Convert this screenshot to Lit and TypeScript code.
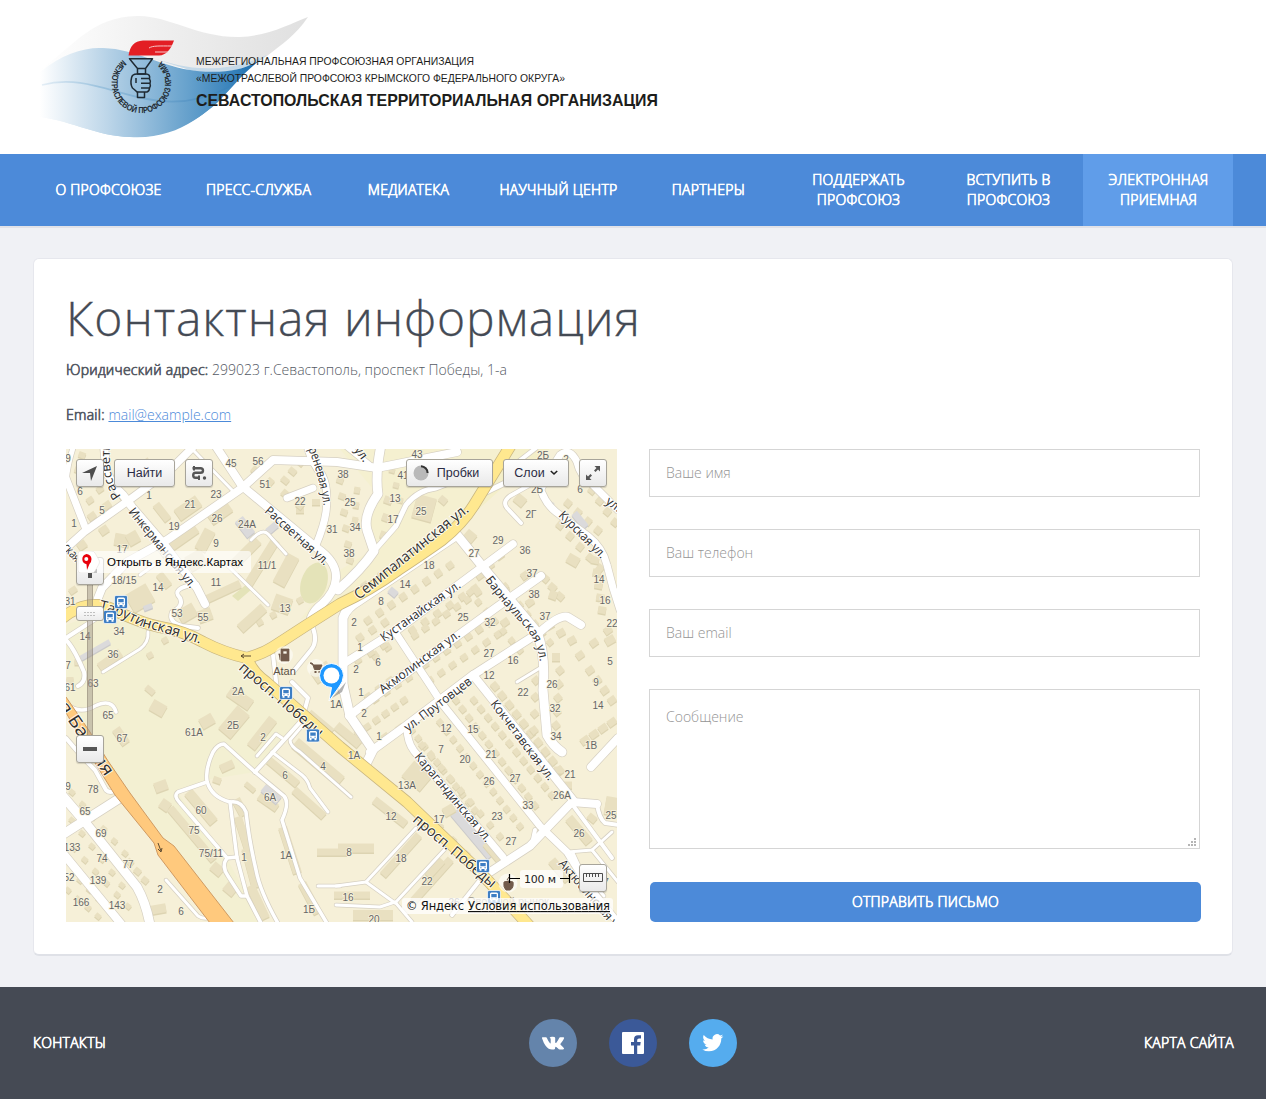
import { LitElement, html, svg, css } from "lit";
import { customElement } from "lit/decorators.js";
import { classMap } from "lit/directives/class-map.js";

/* ---------- Map data: [width, path] ---------- */
const ROADS: [number, string][] = [
  [8, "M104 445L106 468Q109 482 123 495L132 507L163 543L197 588L205 604"],
  [7.5, "M62 552L84 532L132 498L170 470L193 447"],
  [8, "M98 598L102 588L127 562L167 540L242 488L273 460L337 462L377 468L457 452"],
  [8, "M215 445L242 486L317 548Q337 562 336 578Q335 592 322 604Q314 610 311 618"],
  [7, "M307 445Q311 462 322 475Q329 488 326 512Q324 526 316 545"],
  [7, "M66 478L85 527"],
  [5, "M74 445Q68 462 66 482"],
  [3, "M193 450L232 490"],
  [7, "M287 498L313 488"],
  [3, "M251 540Q262 528 268 534L286 554"],
  [3, "M228 566L268 605"],
  [3, "M140 575L158 562"],
  [4, "M197 584Q170 588 180 598Q184 606 172 612Q168 622 182 626L198 628"],
  [3, "M148 632Q149 642 140 649L103 672"],
  [4, "M66 640Q74 648 84 672Q86 682 78 686"],
  [4, "M66 638L100 616"],
  [4, "M313 628Q318 642 311 650L293 672"],
  [4, "M273 655L277 690"],
  [9, "M381 445Q375 475 378 494Q363 515 367 530L374 551Q362 569 338 590"],
  [5, "M374 551L396 526L406 505Q418 490 436 488L462 478"],
  [6, "M345 445L372 467"],
  [9, "M343 690V618Q346 608 360 600L457 535L487 572L537 632Q546 655 543 690L547 735Q553 746 562 752"],
  [7.5, "M343 664L400 628L513 544"],
  [8, "M349 716L390 685L497 607L541 576"],
  [8, "M370 752L407 725L473 675L540 632Q560 614 568 617L581 625"],
  [9, "M343 685L350 716L373 750L366 764"],
  [7, "M397 635L430 685L443 705L540 826L567 852L588 886L620 925"],
  [7, "M407 727Q407 742 414 751L503 857"],
  [8, "M473 675L573 800"],
  [8, "M490 872L530 846L547 828L572 802L597 804"],
  [4, "M597 804Q599 818 605 823L618 825"],
  [4, "M572 804L612 858"],
  [4, "M532 844L535 830"],
  [7, "M538 482Q544 503 556 512L588 536Q603 548 607 565L613 588L620 610"],
  [7, "M541 489Q550 470 560 455Q570 447 577 462Q580 476 592 484L618 510"],
  [4, "M521 523L507 508Q502 502 510 496L535 482L548 462"],
  [5, "M478 496L505 483"],
  [4, "M510 468L536 448"],
  [8, "M618 738L591 767"],
  [9, "M62 835L120 798"],
  [9, "M62 795L85 822L137 887Q146 903 150 925"],
  [8, "M62 852L122 925"],
  [4, "M66 738Q80 755 95 770L106 790Q110 794 116 790"],
  [3.5, "M66 704Q80 715 95 706Q112 698 116 712"],
  [3.5, "M255 772L224 744Q218 744 213 752Q205 769 207 781Q211 797 230 802L237 858L247 896L262 925"],
  [3.5, "M207 782L178 792Q173 796 180 803L227 858L237 857"],
  [3.5, "M230 802Q241 800 246 812Q249 840 256 870Q260 892 279 925"],
  [3.5, "M227 858Q221 866 228 876L241 896L247 896"],
  [3.5, "M255 772L284 796Q290 803 282 820L300 878L328 925"],
  [4, "M255 772L302 720L308 698L292 682"],
  [3, "M257 756L276 734L282 738"],
  [3, "M272 752L302 775Q308 780 310 788L328 812"],
  [3, "M302 726L290 740Q290 746 300 752L351 797"],
  [3, "M166 880L198 916Q204 920 212 917"],
  [3, "M336 886L366 882L416 828"],
  [3, "M366 882L395 903L446 848"],
  [3, "M336 905L380 907L395 902L412 922"],
  [3, "M318 886H340"],
  [4, "M480 880L452 915"],
  [3, "M568 852L592 850L612 832"],
  [3, "M573 853L579 866L604 896"],
  [3, "M592 850L618 882"],
  [3, "M517 682L540 668"],
];

const YELLOW =
  "M60 620Q78 604 98 605Q108 606 122 614Q145 624 160 627Q184 631 203 642Q224 653 247 658Q262 654 273 647Q305 626 340 604Q370 590 398 570Q425 552 442 540Q462 524 474 505L514 440";
const POBEDY = "M247 658Q252 672 266 682L340 747L407 802L480 872L533 930";

/* [x1, y1, x2, y2, count, w, h, angle] : evenly spaced houses */
const HOUSES: number[][] = [
  [73, 590, 96, 572, 2, 8, 6, -35], [92, 516, 122, 494, 3, 8, 7, -35], [90, 500, 110, 478, 3, 7, 6, -35],
  [126, 478, 146, 462, 3, 8, 6, -35], [78, 470, 82, 455, 2, 7, 6, 20], [82, 545, 104, 530, 2, 9, 8, -35],
  [285, 480, 300, 462, 3, 8, 6, 40], [300, 510, 316, 502, 2, 8, 6, 0], [255, 470, 300, 505, 4, 7, 7, 40],
  [340, 480, 350, 560, 6, 7, 6, 20], [357, 490, 355, 520, 3, 6, 6, 10], [388, 500, 384, 535, 3, 8, 7, 20],
  [392, 470, 400, 500, 3, 6, 5, 15], [365, 585, 448, 530, 6, 7, 7, -35], [368, 620, 450, 565, 8, 7, 7, -35],
  [360, 637, 385, 622, 3, 7, 7, -35], [375, 655, 475, 588, 9, 7, 7, -35], [415, 635, 478, 592, 7, 7, 6, -35],
  [358, 660, 384, 645, 3, 7, 6, -35], [425, 664, 490, 622, 7, 7, 7, -35], [368, 696, 390, 680, 3, 7, 6, -35],
  [505, 588, 525, 575, 2, 8, 7, -35], [430, 680, 498, 634, 7, 7, 6, -35], [505, 622, 530, 602, 3, 8, 7, -35],
  [470, 592, 520, 650, 7, 6, 6, 50], [505, 586, 550, 642, 7, 6, 6, 50], [480, 575, 500, 555, 3, 8, 7, -35],
  [358, 733, 404, 700, 6, 7, 6, -35], [364, 706, 420, 670, 6, 7, 6, -35], [385, 737, 400, 728, 2, 8, 7, -35],
  [412, 730, 475, 810, 11, 6, 6, 50], [440, 722, 520, 826, 13, 6, 6, 50], [422, 745, 500, 836, 9, 6, 6, 50],
  [456, 700, 535, 805, 13, 7, 6, 50], [474, 700, 552, 795, 12, 7, 6, 50], [495, 686, 560, 770, 10, 8, 7, 50],
  [560, 670, 556, 725, 5, 7, 7, 50], [536, 680, 534, 730, 4, 7, 7, 50], [558, 770, 568, 785, 2, 8, 7, 0],
  [585, 740, 612, 722, 4, 9, 7, -35], [560, 525, 600, 568, 5, 7, 7, 40], [568, 503, 598, 530, 4, 7, 7, 40],
  [592, 490, 615, 522, 4, 7, 7, 40], [545, 462, 555, 478, 2, 7, 6, 30], [595, 560, 602, 610, 5, 8, 7, 10],
  [550, 625, 572, 640, 3, 8, 7, -30], [580, 655, 608, 630, 3, 8, 7, -35], [560, 596, 545, 578, 3, 8, 7, 40],
  [590, 670, 612, 700, 4, 8, 7, -35], [72, 792, 125, 853, 6, 6, 5, 40], [72, 820, 122, 885, 6, 6, 5, 40],
  [74, 848, 128, 906, 6, 6, 5, 40], [130, 862, 145, 880, 3, 7, 6, 40], [68, 890, 98, 916, 4, 6, 5, 40],
  [80, 880, 118, 918, 5, 6, 5, 40], [580, 830, 592, 818, 2, 9, 7, 40], [440, 826, 480, 868, 4, 6, 6, 40],
  [260, 622, 300, 600, 4, 6, 6, -30], [70, 680, 78, 662, 2, 7, 6, 0], [150, 655, 165, 640, 2, 6, 6, -30],
];

/* [cx, cy, w, h, angle, grey?] : individual blocks */
const BLOCKS: number[][] = [
  [188, 508, 26, 13, -35], [220, 513, 24, 12, -35], [178, 540, 44, 12, -35], [205, 540, 22, 12, 118],
  [162, 512, 20, 8, 52], [196, 560, 18, 16, -30], [246, 552, 34, 10, -45], [262, 562, 52, 9, -58],
  [286, 570, 32, 13, -62], [252, 618, 32, 10, -42], [282, 604, 18, 16, 20], [222, 592, 40, 8, -25],
  [140, 598, 24, 20, -30], [164, 580, 16, 8, 52], [187, 613, 18, 14, -30], [205, 615, 14, 12, -20],
  [122, 540, 15, 12, 10], [133, 538, 12, 12, -30], [110, 660, 26, 9, -35], [424, 508, 20, 24, 15],
  [245, 527, 20, 10, 52, 1], [272, 528, 12, 7, -40, 1], [95, 650, 34, 5, -30, 1], [148, 607, 9, 5, -20, 1],
  [393, 592, 9, 7, 40, 1], [580, 520, 18, 7, 50, 1], [550, 504, 7, 6, 30, 1], [520, 500, 11, 10, 40],
  [234, 722, 30, 16, -50], [240, 698, 26, 12, 35], [262, 733, 36, 10, -52], [158, 708, 15, 12, 30],
  [207, 721, 14, 11, -30], [121, 736, 18, 9, 55], [161, 786, 13, 10, -20], [165, 805, 10, 10, 35],
  [201, 807, 40, 10, 50], [192, 834, 68, 8, 50], [217, 869, 12, 10, 40], [230, 889, 12, 10, 40],
  [240, 807, 18, 9, 62], [243, 833, 34, 8, 72], [251, 868, 40, 9, 75], [258, 902, 36, 9, 65],
  [268, 802, 22, 8, 35], [271, 794, 20, 9, 40, 1], [283, 772, 38, 8, 40], [309, 803, 40, 8, 42],
  [318, 762, 60, 12, 40], [290, 850, 48, 9, 72], [310, 898, 34, 9, 62], [227, 766, 14, 8, -25],
  [217, 780, 8, 6, 20], [250, 787, 12, 5, 40], [158, 909, 16, 9, -10], [417, 776, 24, 20, 40],
  [390, 812, 40, 8, 38], [356, 848, 36, 9, 0], [352, 895, 36, 7, 0], [373, 915, 40, 10, 0],
  [401, 855, 54, 8, -48], [432, 880, 56, 8, -48], [435, 868, 22, 8, -48], [475, 832, 58, 16, 50, 1],
  [494, 853, 26, 8, 50], [449, 810, 12, 9, -30], [579, 830, 32, 9, 50], [560, 870, 26, 9, 50],
  [319, 724, 30, 12, 40], [348, 735, 30, 9, 40], [332, 852, 30, 7, 0], [322, 672, 20, 14, -35],
  [612, 806, 14, 18, 10], [470, 536, 11, 10, 40], [573, 560, 12, 10, 30], [443, 500, 8, 7, 40],
  [610, 640, 10, 8, -30], [553, 595, 8, 8, 20], [556, 657, 8, 8, 0], [150, 690, 10, 6, 40],
];

const NUMBERS: [number, number, string][] = [
  [68, 462, "9"], [80, 495, "6"], [102, 514, "5"], [74, 527, "1"], [149, 499, "1"], [190, 508, "21"], [216, 498, "23"],
  [217, 522, "26"], [174, 530, "19"], [122, 553, "17"], [216, 547, "9"], [247, 528, "24А"], [231, 467, "45"], [258, 465, "56"],
  [265, 488, "51"], [300, 505, "22"], [332, 533, "31"], [267, 569, "11/1"], [216, 586, "11"], [158, 591, "14"],
  [124, 584, "18/15"], [70, 605, "31"], [177, 617, "53"], [203, 621, "55"], [285, 612, "13"], [85, 640, "14"],
  [119, 635, "34"], [113, 658, "36"], [68, 669, "7"], [93, 687, "63"], [70, 691, "61"], [417, 458, "43"], [343, 478, "38"],
  [403, 479, "41"], [350, 506, "25"], [395, 502, "13"], [421, 515, "25"], [393, 523, "17"], [355, 531, "34"], [349, 557, "38"],
  [498, 544, "29"], [525, 554, "36"], [474, 557, "27"], [429, 569, "18"], [405, 588, "14"], [381, 605, "8"], [354, 626, "2"],
  [532, 577, "37"], [534, 598, "38"], [599, 583, "14"], [605, 604, "16"], [612, 627, "22"], [463, 621, "25"], [490, 626, "32"],
  [545, 620, "37"], [360, 651, "1"], [378, 666, "6"], [489, 657, "27"], [513, 664, "16"], [356, 673, "2"], [489, 679, "12"],
  [610, 665, "5"], [596, 686, "9"], [552, 688, "26"], [543, 459, "2Б"], [537, 493, "2Б"], [531, 518, "2Г"], [580, 493, "6"],
  [566, 463, "2"], [108, 719, "65"], [122, 742, "67"], [194, 736, "61А"], [238, 695, "2А"], [233, 729, "2Б"], [263, 741, "2"],
  [323, 770, "4"], [285, 779, "6"], [270, 801, "6А"], [93, 793, "78"], [68, 790, "9"], [85, 815, "65"], [101, 837, "69"],
  [72, 851, "133"], [102, 862, "74"], [128, 868, "77"], [69, 881, "52"], [98, 884, "139"], [81, 906, "166"], [117, 909, "143"],
  [201, 814, "60"], [194, 834, "75"], [211, 857, "75/11"], [244, 861, "1"], [286, 859, "1А"], [160, 893, "2"], [181, 915, "6"],
  [309, 913, "1Б"], [361, 696, "1"], [364, 717, "2"], [379, 740, "1"], [446, 732, "12"], [473, 733, "15"], [441, 753, "7"],
  [465, 763, "20"], [491, 758, "21"], [523, 696, "22"], [555, 712, "32"], [598, 709, "14"], [556, 740, "34"], [591, 749, "1В"],
  [570, 778, "21"], [354, 759, "1А"], [336, 708, "1А"], [407, 789, "13А"], [489, 785, "26"], [515, 782, "27"], [562, 799, "26А"],
  [528, 809, "33"], [439, 823, "17"], [497, 820, "23"], [391, 820, "12"], [511, 845, "27"], [579, 837, "26"], [611, 819, "25"],
  [349, 856, "8"], [401, 862, "18"], [427, 885, "22"], [348, 901, "16"], [374, 923, "20"], [454, 906, "26"], [606, 886, "7"],
];

/* [path, text, length, size] */
const STREETS: [string, string, number, number?][] = [
  ["M121 496Q106 478 111 438", "Рассветн", 56],
  ["M128 512L193 592", "Инкерманская ул.", 99],
  ["M264 512L327 568", "Рассветная ул.", 81],
  ["M303 437Q318 468 324 508", "Сиреневая ул.", 72],
  ["M99 610Q118 614 140 626Q160 631 204 645", "Тарутинская ул.", 107, 14.5],
  ["M359 600L472 509", "Семипалатинская ул.", 142, 14.5],
  ["M384 642L463 586", "Кустанайская ул.", 95],
  ["M383 694L461 636", "Акмолинская ул.", 97],
  ["M408 732L473 683", "ул. Прутовцев", 81],
  ["M485 580Q505 607 523 625Q538 642 540 663", "Барнаульская ул.", 100],
  ["M558 516L604 562", "Курская ул.", 61],
  ["M605 503L620 514", "ул.", 16],
  ["M354 450L366 466", "ул.", 16],
  ["M490 704L549 782", "Кокчетавская ул.", 97],
  ["M414 757L487 844", "Карагандинская ул.", 112],
  ["M238 669L320 739", "просп. Победы", 106, 14.5],
  ["M412 821L492 889", "просп. Победы", 104, 14.5],
  ["M558 864L620 936", "Актюбинская ул.", 94],
  ["M62 548L76 563", "ская", 20],
  ["M52 697L106 778", "ая Балкия", 96, 17],
];

const STOPS = [[121, 602], [110, 617], [286, 693], [313, 735.5], [483, 866], [494, 897]];

@customElement("city-map")
class CityMap extends LitElement {
  static styles = css`
    :host { display: block; position: relative; width: 551px; height: 473px; overflow: hidden; }
    .ground { display: block; width: 551px; height: 473px; }
    .num { font: 10px "Liberation Sans", sans-serif; fill: #666; text-anchor: middle; stroke: #f8f3dd; stroke-width: 1.6px; paint-order: stroke; }
    .street { font-family: "Open Sans", "Noto Sans", sans-serif; font-weight: 400; fill: #2e2e2e; stroke: #fff; stroke-opacity: .75; stroke-width: 2px; paint-order: stroke; }
    .poi { font: 11px "Liberation Sans", sans-serif; fill: #5c5246; text-anchor: middle; }
    .market { fill: #9b9488; }
    .btn { position: absolute; box-sizing: border-box; height: 28px; min-width: 28px; border: 1px solid #a7a49a; border-radius: 3px;
      background: linear-gradient(#fff, #e9e9e9); display: flex; align-items: center; justify-content: center; gap: 6px; padding: 0;
      font: 12.5px "Liberation Sans", Arial, sans-serif; color: #2b2b44; box-shadow: 0 1px 1px rgba(0,0,0,.15); }
    .locate { left: 10px; top: 10px; }
    .find { left: 48px; top: 10px; width: 61px; }
    .route { left: 119px; top: 10px; }
    .jams { left: 340px; top: 10px; width: 87px; gap: 8px; padding-right: 7px; }
    .layers { left: 437px; top: 10px; width: 66px; gap: 5px; }
    .full { left: 513px; top: 10px; }
    .plus { left: 10px; top: 108px; }
    .minus { left: 10px; top: 286px; }
    .ruler { left: 513px; top: 415px; }
    .track { position: absolute; left: 21px; top: 136px; width: 6px; height: 152px; box-sizing: border-box; border: solid rgba(120,110,95,.35); border-width: 0 1px; background: rgba(160,150,135,.5); }
    .thumb { position: absolute; box-sizing: border-box; left: 10px; top: 157px; width: 28px; height: 15px; border: 1px solid #a7a49a; border-radius: 3px; background: linear-gradient(#fff, #ececec); display: flex; align-items: center; justify-content: center; }
    .open { position: absolute; left: 11px; top: 102px; width: 174px; height: 22px; box-sizing: border-box; padding-left: 30px; border-radius: 3px; background: rgba(255,255,255,.65);
      font: 11.5px/22px "Liberation Sans", sans-serif; color: #000; white-space: nowrap; }
    .open svg { position: absolute; left: 0; top: 0; }
    .scale { position: absolute; left: 442px; top: 421px; width: 64px; height: 18px; }
    .scale-text { font: 11px "DejaVu Sans", sans-serif; fill: #222; }
    .legal { position: absolute; left: 336px; top: 449px; width: 211px; height: 16px; box-sizing: border-box; padding-left: 4px; border-radius: 3px; background: rgba(255,255,255,.75); }
    .legal svg { display: block; }
    .legal-text { font: 11.5px "DejaVu Sans", sans-serif; fill: #111; }
    .legal-link { text-decoration: underline; }
  `;

  private house(cx: number, cy: number, w: number, h: number, a: number, grey = false) {
    const side = grey ? "#cbcaca" : "#ddd4b2";
    const top = grey ? "#dbdadb" : "#e9e0c1";
    return svg`<g transform=${`translate(${cx} ${cy})`}>
      <rect x=${-w / 2} y=${-h / 2} width=${w} height=${h} transform=${`translate(0 1.5) rotate(${a})`} fill=${side}></rect>
      <rect x=${-w / 2} y=${-h / 2} width=${w} height=${h} transform=${`rotate(${a})`} fill=${top}></rect></g>`;
  }

  render() {
    const rows = HOUSES.flatMap(([x1, y1, x2, y2, n, w, h, a]) =>
      Array.from({ length: n }, (_, i) => {
        const t = n > 1 ? i / (n - 1) : 0;
        return this.house(x1 + (x2 - x1) * t, y1 + (y2 - y1) * t, w, h, a);
      })
    );
    return html`
      <svg class="ground" viewBox="66 449 551 473">
        <rect x="66" y="449" width="551" height="473" fill="#f6f0d8"></rect>
        <path d="M66 625L100 612L240 662L300 720L255 772L205 780L178 793L225 855L262 922H225L160 840L66 700Z" fill="#f3f0d2"></path>
        <path d="M340 449H510L440 540L340 600L300 620L340 570L372 550L365 525L378 495Z" fill="#f5f0d0"></path>
        <path d="M512 449H550L500 490L450 535Z" fill="#f4efc9"></path>
        <ellipse cx="314" cy="583" rx="13" ry="21" fill="#e4e3b8" transform="rotate(18 314 583)"></ellipse>
        <path d="M232 596L247 584L252 589L238 601Z" fill="#e4e3b8"></path>
        ${rows}
        ${BLOCKS.map(([x, y, w, h, a, g]) => this.house(x, y, w, h, a, !!g))}
        <g fill="none" stroke-linecap="round" stroke-linejoin="round">
          ${ROADS.map(([w, d]) => svg`<path d=${d} stroke="#d6d0c2" stroke-width=${w + 1.4}></path>`)}
          ${ROADS.map(([w, d]) => svg`<path d=${d} stroke="#fff" stroke-width=${w}></path>`)}
          <path d=${YELLOW} stroke="#c9b680" stroke-width="12"></path>
          <path d=${POBEDY} stroke="#c9b680" stroke-width="12"></path>
          <path d=${YELLOW} stroke="#ffe88f" stroke-width="10.5"></path>
          <path d=${POBEDY} stroke="#ffe88f" stroke-width="10.5"></path>
        </g>
        <path d="M60 692L66 697L90 732L108 761L130 793L163 838L174 846L234 923H210L158 855L154 843L115 795L90 755L60 702Z" fill="#ffc97d" stroke="#cf9a62" stroke-width="1"></path>
        <path d="M158 843L161 851M158 849L161 852L162 848M251 656H241M244 654L241 656L244 658" fill="none" stroke="#5d4a30" stroke-width="1"></path>
        ${NUMBERS.map(([x, y, t]) => svg`<text class="num" x=${x} y=${y}>${t}</text>`)}
        ${STREETS.map(([d, t, len, size], i) => svg`<path id=${`s${i}`} d=${d} fill="none"></path>
          <text class="street" font-size=${size ?? 12.5}><textPath href=${`#s${i}`} textLength=${len} lengthAdjust="spacingAndGlyphs">${t}</textPath></text>`)}
        <circle cx="284" cy="655" r="9" fill="#fff" opacity=".5"></circle>
        <path d="M281 649H289V661H281ZM283 651V654H287V651ZM278.500 654H280V660" fill="#725b4b" fill-rule="evenodd" stroke="#725b4b" stroke-width=".7"></path>
        <text class="poi" x="284.500" y="675">Atan</text>
        <circle cx="316" cy="668" r="9" fill="#fff" opacity=".5"></circle>
        <path d="M310 663H312L313.500 665H322L320 669.500H314.500L313 665Z" stroke="#725b4b" stroke-width="1" fill="#725b4b"></path>
        <path d="M314.500 672H316.500M318.500 672H320.500" stroke="#725b4b" stroke-width="1.800"></path>
        <circle cx="508" cy="883" r="9.500" fill="#fff" opacity=".6"></circle>
        <path d="M504 882Q508 880 513 882Q514 888 510 890H506Q503 887 504 882ZM507 880L509 877" fill="#725b4b" stroke="#725b4b"></path>
        <text class="poi market" x="508" y="905">Овощной рынок</text>
        ${STOPS.map(([x, y]) => svg`<g transform=${`translate(${x} ${y})`}>
          <rect x="-6.500" y="-6.500" width="13" height="13" rx="1.500" fill="#3d7ec4" stroke="#fff" stroke-width=".7"></rect>
          <path d="M-2.500 -4.500H2.500Q4 -4.500 4 -3V3H-4V-3Q-4 -4.500 -2.500 -4.500ZM-2.700 -3V.200H2.700V-3ZM-2.700 1.200V2.200H-1.500V1.200ZM1.500 1.200V2.200H2.700V1.200ZM-3.500 3H-1.500V4.700H-3.500ZM1.500 3H3.500V4.700H1.500Z" fill="#fff" fill-rule="evenodd"></path></g>`)}
        <path d="M332 698L346 682L342 692Z" fill="#666" opacity=".5"></path>
        <path d="M331.500 663.500A12 12 0 0 1 343.500 675.500Q343 682 339 687L329 701L331.500 687.500A12 12 0 0 1 331.500 663.500Z" fill="#1e98ff" stroke="#fff" stroke-width="1"></path>
        <circle cx="331.500" cy="675.500" r="8" fill="#fff"></circle>
      </svg>

      <div class="track"></div>
      <button class="btn locate"><svg width="18" height="18"><path d="M1 9L16 2L10 17L9 9Z" fill="#4d4d4d"></path></svg></button>
      <button class="btn find">Найти</button>
      <button class="btn route"><svg width="16" height="16" fill="none" stroke="#555" stroke-width="2.400"><path d="M1.500 3.200H9.500Q12 3.200 12 5.500T9.500 7.800H4.500Q2.200 7.800 2.200 10.300T4.500 12.800H9"></path><path d="M3 1V5.400M8 10.600V15" stroke-width="2"></path><circle cx="13.500" cy="13" r="1.700" fill="#555" stroke="none"></circle></svg></button>
      <button class="btn jams"><svg width="16" height="16"><circle cx="8" cy="8" r="7.500" fill="#b9b9b9"></circle><path d="M8 1.200A6.800 6.800 0 0 1 14.600 8" fill="none" stroke="#333" stroke-width="2"></path></svg>Пробки</button>
      <button class="btn layers">Слои<svg width="8" height="6"><path d="M.800 1L4 4L7.200 1" fill="none" stroke="#222" stroke-width="1.600"></path></svg></button>
      <button class="btn full"><svg width="16" height="16"><path d="M9.500 1H15V6.500L13 4.500L10.500 7L9 5.500L11.500 3ZM1 9.500V15H6.500L4.500 13L7 10.500L5.500 9L3 11.500Z" fill="#555"></path></svg></button>
      <button class="btn plus"><svg width="14" height="14"><path d="M5 0H9V5H14V9H9V14H5V9H0V5H5Z" fill="#555"></path></svg></button>
      <button class="btn minus"><svg width="14" height="4"><rect width="14" height="4" fill="#555"></rect></svg></button>
      <div class="thumb"><svg width="12" height="6"><path d="M.500 1.500H12M.500 4.500H12" stroke="#888" stroke-dasharray="1 2"></path></svg></div>
      <button class="btn ruler"><svg width="22" height="12" fill="none" stroke="#4d4d4d"><path d="M1.500 1.500H20.500V9.500H1.500ZM4.500 2V5M7.500 2V5M10.500 2V5M13.500 2V5M16.500 2V5"></path></svg></button>
      <div class="open"><svg width="24" height="22"><path d="M1 3Q1 0 4 0H14Q17 0 18 2L22 9Q23 11 22 13L18 20Q17 22 14 22H4Q1 22 1 19Z" fill="#fff" stroke="#dedbd5" stroke-width=".500"></path><path d="M9.500 3A5.200 5.200 0 0 1 14.500 8Q14.500 11 12.500 13L10 19L9.500 13.200A5.200 5.200 0 0 1 9.500 3Z" fill="#e8000b"></path><circle cx="9.300" cy="8" r="2" fill="#fff"></circle></svg><span>Открыть в Яндекс.Картах</span></div>
      <svg class="scale"><rect x="12" width="43" height="18" rx="3" fill="#fff" opacity=".75"></rect><path d="M1.500 4V13M1.500 8.500H12M61.500 4V13M52 8.500H61" stroke="#000" stroke-width="1.200" fill="none"></path><text class="scale-text" x="16" y="13" textLength="32">100 м</text></svg>
      <div class="legal"><svg width="207" height="16"><text class="legal-text" x="0" y="12" textLength="58">© Яндекс</text><text class="legal-text legal-link" x="62" y="12" textLength="142">Условия использования</text></svg></div>
    `;
  }
}

@customElement("union-logo")
class UnionLogo extends LitElement {
  static styles = css`
    :host { display: block; }
    svg { display: block; }
    .small { font: 11px "Liberation Sans", Arial, sans-serif; fill: #1d1d1b; }
    .large { font: bold 17px "Liberation Sans", Arial, sans-serif; fill: #1d1d1b; }
    .ring { font: bold 8.8px "Liberation Sans Narrow", "Liberation Sans", sans-serif; fill: #222b33; }
  `;
  render() {
    return html`<svg width="640" height="154" viewBox="33 0 640 154">
      <defs>
        <linearGradient id="grey"><stop offset="0" stop-color="#fff"></stop><stop offset=".45" stop-color="#efefef"></stop><stop offset="1" stop-color="#e0e0e0"></stop></linearGradient>
        <linearGradient id="blue"><stop offset="0" stop-color="#fff"></stop><stop offset=".3" stop-color="#b5d1e6"></stop><stop offset=".65" stop-color="#67a2cd"></stop><stop offset="1" stop-color="#1269ad"></stop></linearGradient>
        <linearGradient id="low"><stop offset="0" stop-color="#fff"></stop><stop offset=".35" stop-color="#bdd6e9"></stop><stop offset=".75" stop-color="#6aa3cd"></stop><stop offset="1" stop-color="#3a86be"></stop></linearGradient>
        <linearGradient id="line"><stop offset="0" stop-color="#e4eef6"></stop><stop offset=".3" stop-color="#9dc3de"></stop><stop offset="1" stop-color="#3b83bb"></stop></linearGradient>
      </defs>
      <path d="M40 70C76 44 92 17 137 16C168 15 198 38 240 37C268 36 290 24 308 17C295 36 282 44 267 56C250 68 225 76 190 70L100 48Z" fill="url(#grey)"></path>
      <path d="M152 58C180 66 215 78 267 55C248 70 220 76 190 70Z" fill="#c5d9e8"></path>
      <path d="M40 72C62 54 84 47 103 48C137 49 160 67 197 71C228 74 249 69 267 55C245 70 235 85 217 103C190 127 160 138 130 137C97 136 75 122 40 117Z" fill="url(#blue)"></path>
      <path d="M40 85C80 76 110 92 147 100C180 106 210 98 232 86C210 111 180 140 130 137C97 136 75 122 40 117Z" fill="url(#low)"></path>
      <path d="M42 85C80 75 110 92 147 99C180 106 208 98 229 87" fill="none" stroke="url(#line)" stroke-width="1.800"></path>
      <path d="M128.500 55.500C130 46 134 41 143 40.500H174C171 49 166 55.500 159 55.500Z" fill="#e31e24"></path>
      <path d="M149 48C153 45.500 159 46 172 46M155 52H168" fill="none" stroke="#f7c9ca" stroke-width="1"></path>
      <g fill="none" stroke="#1f2a33" stroke-width="1.500" stroke-linejoin="round">
        <path d="M129.500 58.700H152.500L145.500 68.500H137.500ZM137.500 68.500H145.500V74H137.500ZM137.500 91.500V97.500H144.500V92"></path>
        <path d="M137 74Q132 74 131.500 78Q130 84 132.500 88Q135 90 137 92H147Q149.500 91 149.500 88Q151 86 150 83.500Q151 81 149.500 79Q150.500 74 146 74Z"></path>
        <path d="M141 78.500H149M141 83.200H150M141 88H149M136 78V83"></path>
      </g>
      <path id="arc" d="M122.800 60A29.800 29.800 0 1 0 160.500 60.500" fill="none"></path>
      <text class="ring"><textPath href="#arc" textLength="145" lengthAdjust="spacingAndGlyphs">МЕЖОТРАСЛЕВОЙ ПРОФСОЮЗ КРЫМА</textPath></text>
      <text class="small" x="196" y="65" textLength="278" lengthAdjust="spacingAndGlyphs">МЕЖРЕГИОНАЛЬНАЯ ПРОФСОЮЗНАЯ ОРГАНИЗАЦИЯ</text>
      <text class="small" x="196" y="82" textLength="369" lengthAdjust="spacingAndGlyphs">«МЕЖОТРАСЛЕВОЙ ПРОФСОЮЗ КРЫМСКОГО ФЕДЕРАЛЬНОГО ОКРУГА»</text>
      <text class="large" x="196" y="106" textLength="462" lengthAdjust="spacingAndGlyphs">СЕВАСТОПОЛЬСКАЯ ТЕРРИТОРИАЛЬНАЯ ОРГАНИЗАЦИЯ</text>
    </svg>`;
  }
}

@customElement("app-root")
class AppRoot extends LitElement {
  static styles = css`
    :host { display: block; min-height: 1099px; background: #f0f1f5; font: 300 14px/20px "Open Sans", "Noto Sans", sans-serif; color: #555a64; }
    .header { height: 154px; background: #fff; padding-left: 33px; overflow: hidden; }
    .nav { height: 72px; background: #4c8ad9; display: flex; padding: 0 33px; border-bottom: 2px solid #e1e2e8; }
    .item { width: 150px; display: flex; align-items: center; justify-content: center; text-align: center; padding: 0 15px 0 16px; box-sizing: border-box; color: #fff; text-decoration: none; text-transform: uppercase; }
    .heavy { -webkit-text-stroke: .7px currentColor; letter-spacing: .27px; }
    .item.active { background: #609de9; }
    .card { margin: 30px 33px 0; box-sizing: border-box; height: 698px; padding: 30px 32px 0; background: #fff; border: 1px solid #e6e7ed; border-bottom: 2px solid #dfe1e7; border-radius: 6px; }
    h1 { margin: 0; font-weight: 300; font-size: 48px; line-height: 57px; letter-spacing: .92px; color: #444a54; -webkit-text-stroke: .3px currentColor; }
    p { margin: 14px 0 0; }
    p + p { margin-top: 25px; }
    b { font-weight: 300; }
    .mail { color: #4c8ad9; }
    .split { display: flex; gap: 32px; margin-top: 24px; }
    .form { width: 551px; display: flex; flex-direction: column; gap: 32px; }
    .field { display: block; box-sizing: border-box; width: 551px; height: 48px; margin: 0; padding: 0 16px 2px; border: 1px solid #d5d5d5; border-radius: 0; background: #fff; font: inherit; outline: none; }
    .field::placeholder { color: #949494; opacity: 1; }
    .area { position: relative; height: 160px; }
    .message { height: 160px; padding-top: 17px; resize: none; }
    .grip { position: absolute; right: 4px; bottom: 3px; }
    .send { height: 40px; width: 551px; margin: 1px 0 0 1px; padding: 0; border: 0; border-radius: 5px; background: #4c8ad9; color: #fff; font: inherit; text-transform: uppercase; }
    .footer { margin-top: 31px; height: 112px; box-sizing: border-box; padding: 0 32px 0 33px; background: #454a54; display: grid; grid-template-columns: 1fr auto 1fr; align-items: center; text-transform: uppercase; }
    .footer a { color: #fff; text-decoration: none; }
    .right { text-align: right; }
    .social { display: flex; gap: 32px; margin-right: 1px; }
    .social svg { display: block; }
  `;

  private nav = ["О профсоюзе", "Пресс-служба", "Медиатека", "Научный центр", "Партнеры", "Поддержать профсоюз", "Вступить в профсоюз", "Электронная приемная"];

  render() {
    return html`
      <header class="header"><union-logo></union-logo></header>
      <nav class="nav">
        ${this.nav.map((t, i) => html`<a class=${classMap({ item: true, heavy: true, active: i === 7 })}>${t}</a>`)}
      </nav>
      <main class="card">
        <h1>Контактная информация</h1>
        <p><b class="heavy">Юридический адрес:</b> 299023 г.Севастополь, проспект Победы, 1-а</p>
        <p><b class="heavy">Email:</b> <a class="mail" href="mailto:mail@example.com">mail@example.com</a></p>
        <div class="split">
          <city-map></city-map>
          <form class="form">
            <input class="field" placeholder="Ваше имя">
            <input class="field" placeholder="Ваш телефон">
            <input class="field" placeholder="Ваш email">
            <div class="area">
              <textarea class="field message" placeholder="Сообщение"></textarea>
              <svg class="grip" width="8" height="8" fill="#b5b5b5"><path d="M6 0H8V2H6ZM3 3H5V5H3ZM6 3H8V5H6ZM0 6H2V8H0ZM3 6H5V8H3ZM6 6H8V8H6Z"></path></svg>
            </div>
            <button class="send heavy" type="button">Отправить письмо</button>
          </form>
        </div>
      </main>
      <footer class="footer">
        <a class="heavy">Контакты</a>
        <div class="social">
          <svg width="48" height="48"><circle cx="24" cy="24" r="24" fill="#6484ab"></circle><path d="M13.500 18.300H17Q17.600 18.300 18 19.200Q19.500 22.800 21 24.300Q21.700 24.800 21.700 23.500V20.300Q21.700 19 20.600 18.700Q21.300 17.800 23 17.800Q26.200 17.600 26.200 19V23Q26.300 24.700 27.500 23.400Q29 21.500 30.200 18.900Q30.500 18.300 31.200 18.300H34.500Q35.600 18.300 34.900 19.800Q34 21.800 31.500 24.700Q31.200 25.300 31.600 25.700Q34 27.700 35 29.300Q35.400 30.300 34 30.500H30.800Q29.800 30.500 28.800 29.300Q26.400 26.700 26.200 28.600Q26.200 30.500 25 30.500H23Q19.500 30.500 16.800 27Q14.500 24 13 19.300Q12.800 18.400 13.500 18.300Z" fill="#fff"></path></svg>
          <svg width="48" height="48"><circle cx="24" cy="24" r="24" fill="#3b5998"></circle><path d="M14 13H34Q35 13 35 14V34Q35 35 34 35H28.200V26.500H31.200L31.700 23H28.200V21Q28.200 19.400 30 19.400H32V16.200H29Q25 16.200 25 20.400V23H22V26.500H25V35H14Q13 35 13 34V14Q13 13 14 13Z" fill="#fff"></path></svg>
          <svg width="48" height="48"><circle cx="24" cy="24" r="24" fill="#55acee"></circle><g transform="translate(13.300 13.200) scale(.88)"><path d="M23.950 4.570a10 10 0 0 1-2.820.770 4.960 4.960 0 0 0 2.160-2.720c-.950.550-2 .950-3.130 1.180a4.920 4.920 0 0 0-8.390 4.480C7.690 8.100 4.070 6.130 1.640 3.160a4.820 4.820 0 0 0-.670 2.480c0 1.710.870 3.210 2.190 4.100a4.900 4.900 0 0 1-2.230-.620v.060a4.920 4.920 0 0 0 3.950 4.830 5 5 0 0 1-2.210.080 4.940 4.940 0 0 0 4.600 3.420A9.870 9.870 0 0 1 0 19.540a14 14 0 0 0 7.550 2.210c9.050 0 14-7.500 14-13.980 0-.210 0-.420-.020-.630a9.940 9.940 0 0 0 2.420-2.570Z" fill="#fff"></path></g></svg>
        </div>
        <a class="heavy right">Карта сайта</a>
      </footer>
    `;
  }
}
